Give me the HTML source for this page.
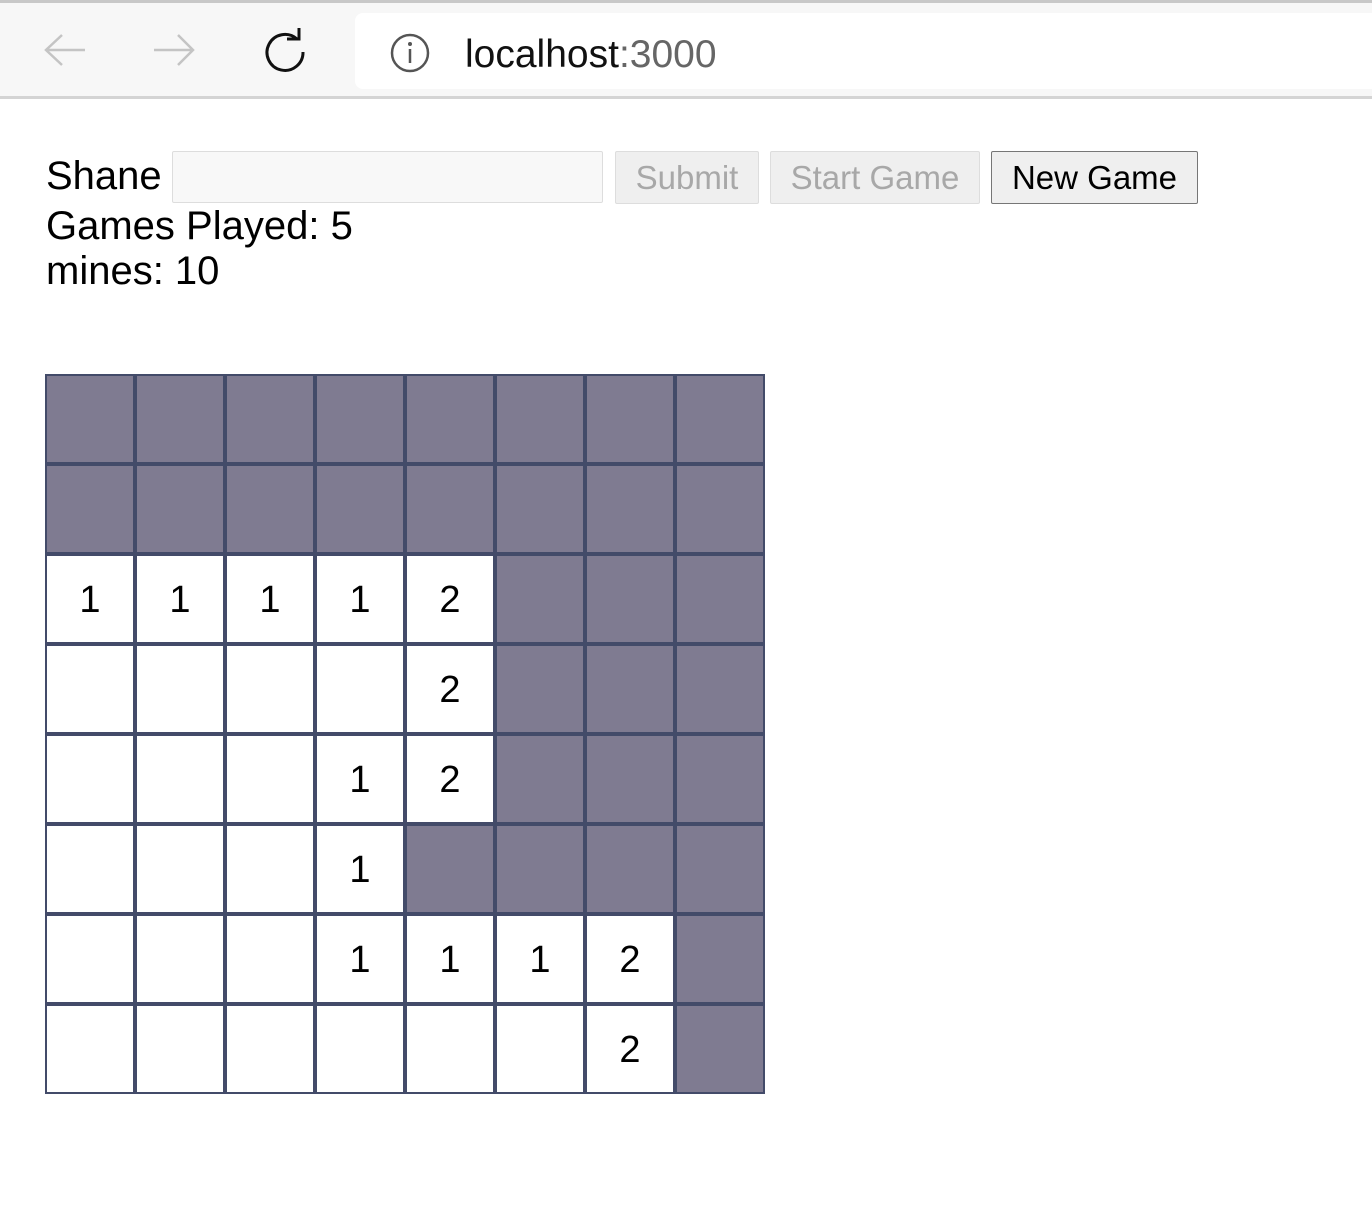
<!DOCTYPE html>
<html><head><style>
body{margin:0;width:1372px;height:1227px;background:#fff;font-family:"Liberation Sans",Arial,sans-serif;position:relative;overflow:hidden}
.bar{position:absolute;left:0;top:0;width:1372px;height:99px;background:#f7f7f7;border-top:3px solid #c8c8c8;box-sizing:border-box;border-bottom:3px solid #d4d4d4}
.url{position:absolute;left:355px;top:10px;width:1030px;height:76px;background:#fff;border-radius:8px}
.t{position:absolute;font-size:40px;color:#000;line-height:1}
.inp{position:absolute;left:172px;top:151px;width:431px;height:52px;background:#f8f8f8;border:1px solid #ddd;box-sizing:border-box;border-radius:2px}
.btn{position:absolute;top:151px;height:53px;box-sizing:border-box;font-size:33px;text-align:center;line-height:51px;border:1px solid #ddd;background:#efefef;color:#a8a8a8;border-radius:2px}
.grid{position:absolute;left:45px;top:374px;width:720px;height:720px}
.c{position:absolute;width:90px;height:90px;box-sizing:border-box;border:2px solid #434b69;background:#fff;font-size:38px;text-align:center;line-height:88px}
.g{background:#7f7b91}
</style></head><body>
<div class="bar">
<svg style="position:absolute;left:40px;top:26px" width="50" height="44" viewBox="0 0 50 44"><path d="M45 21H6M22 6L6 21L22 36" fill="none" stroke="#c4c4c4" stroke-width="2.5"/></svg>
<svg style="position:absolute;left:150px;top:26px" width="50" height="44" viewBox="0 0 50 44"><path d="M4 21H43M28 6L43 21L28 36" fill="none" stroke="#c4c4c4" stroke-width="2.5"/></svg>
<svg style="position:absolute;left:260px;top:24px" width="50" height="50" viewBox="0 0 50 50"><path d="M37 12A18 18 0 1 0 43 25" fill="none" stroke="#111" stroke-width="3"/><path d="M27 12H39V1" fill="none" stroke="#111" stroke-width="3"/></svg>
<div class="url">
<svg style="position:absolute;left:34px;top:19px" width="42" height="42" viewBox="0 0 42 42"><circle cx="21" cy="21" r="18" fill="none" stroke="#555" stroke-width="2.5"/><circle cx="21" cy="12" r="2" fill="#555"/><path d="M21 17V31" stroke="#555" stroke-width="2.5"/></svg>
<div style="position:absolute;left:110px;top:20px;font-size:39px;color:#111">localhost<span style="color:#666">:3000</span></div>
</div>
</div>
<div class="t" style="left:46px;top:156px">Shane</div>
<div class="inp"></div>
<div class="btn" style="left:615px;width:144px">Submit</div>
<div class="btn" style="left:770px;width:210px">Start Game</div>
<div class="btn" style="left:991px;width:207px;color:#000;border:1px solid #767676;background:#efefef">New Game</div>
<div class="t" style="left:46px;top:206px">Games Played: 5</div>
<div class="t" style="left:46px;top:251px">mines: 10</div>
<div class="grid" id="g"></div>
<script>
var rows=["gggggggg","gggggggg","11112ggg","    2ggg","   12ggg","   1gggg","   1112g","      2g"];
var h="";
for(var r=0;r<8;r++)for(var c=0;c<8;c++){var ch=rows[r][c];h+='<div class="c'+(ch=="g"?" g":"")+'" style="left:'+(c*90)+'px;top:'+(r*90)+'px">'+(ch!="g"&&ch!=" "?ch:"")+'</div>';}
document.getElementById("g").innerHTML=h;
</script>
</body></html>
